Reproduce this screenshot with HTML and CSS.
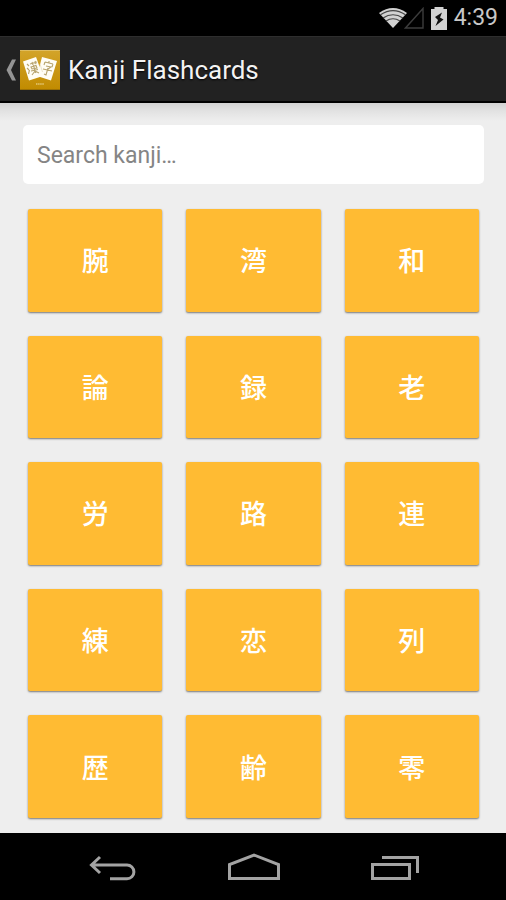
FILE: index.html
```
<!DOCTYPE html>
<html lang="en">
<head>
<meta charset="utf-8">
<meta name="viewport" content="width=device-width, initial-scale=1">
<title>Kanji Flashcards</title>
<link rel="stylesheet" href="styles.css">
</head>
<body>
<div class="status-bar">
  <svg class="wifi" viewBox="0 0 28 20" aria-hidden="true">
    <path d="M0 5Q14-5 28 5L14 20Z" fill="#d2d2d2"/>
    <path d="M1.500 6.800Q14-1.500 26.500 6.800M4 10Q14 3.500 24 10M7 13Q14 8.500 21 13" fill="none" stroke="#444" stroke-width="1.200"/>
  </svg>
  <svg class="signal" viewBox="0 0 20 22" aria-hidden="true"><path d="M1.500 21H19V1.500Z" fill="none" stroke="#3c3c3c" stroke-width="1.400"/></svg>
  <svg class="battery" viewBox="0 0 16 23" aria-hidden="true">
    <path d="M3.500 0H12.500V2H16V23H0V2H3.500Z" fill="#d2d2d2"/>
    <path d="M11 5.500L4 10L7 13L4.500 19L12.500 12.500L9 10.500Z" fill="#111"/>
  </svg>
  <time class="clock">4:39</time>
</div>
<header class="action-bar">
  <button class="up" type="button" aria-label="Navigate up">
    <svg class="chevron" viewBox="0 0 12 24" aria-hidden="true"><path d="M7 1.500H11L6 12L11 22.500H7L1.500 12Z" fill="#959595"/></svg>
    <svg class="app-icon" viewBox="0 0 40 40" aria-hidden="true">
      <defs><linearGradient id="gold" x1="0" y1="0" x2="0" y2="1"><stop offset="0" stop-color="#d3a42a"/><stop offset="1" stop-color="#c18b00"/></linearGradient></defs>
      <rect width="40" height="40" rx="1.500" fill="url(#gold)"/>
      <path d="M0 .5H40" stroke="#dfbd60"/>
      <path d="M0 39.500H40" stroke="#9c7105"/>
      <path d="M3 11.500L16 7L23 26L9 30.500Z" fill="#fffdf5"/>
      <path d="M22 7L37 11L31 30.500L17 26Z" fill="#fffdf5"/>
      <path d="M20 14L22.500 22" stroke="#e3d9bc" stroke-width=".7"/>
      <g fill="none" stroke="#b8a46e" stroke-width="1.100">
        <path d="M7 14L9 16M7 18L9 20M8.500 24L9.500 20M10 14L17 12M12 12L13 15M15 11L16 14M11 17L16 15.500L17 18L12 19ZM13.500 15L15.500 23M11 21L18 19.500M15 21L12 25M15 21L19 23"/>
        <path d="M25 12L33 14M25 12L24 15M33 14L32 17M29 11L29 13M26 16L31 17L28 19M23 19L32 21M28 18L26 25L24 24"/>
      </g>
      <path d="M16 34H24" stroke="#e2c777" stroke-width="1.500" stroke-dasharray="1.500 .6"/>
    </svg>
  </button>
  <h1 class="title">Kanji Flashcards</h1>
</header>
<main class="content">
  <input class="search" type="search" placeholder="Search kanji…" aria-label="Search kanji">
  <div class="cards" lang="ja">
    <button class="card" type="button">腕</button>
    <button class="card" type="button">湾</button>
    <button class="card" type="button">和</button>
    <button class="card" type="button">論</button>
    <button class="card" type="button">録</button>
    <button class="card" type="button">老</button>
    <button class="card" type="button">労</button>
    <button class="card" type="button">路</button>
    <button class="card" type="button">連</button>
    <button class="card" type="button">練</button>
    <button class="card" type="button">恋</button>
    <button class="card" type="button">列</button>
    <button class="card" type="button">歴</button>
    <button class="card" type="button">齢</button>
    <button class="card" type="button">零</button>
  </div>
</main>
<nav class="nav-bar" aria-label="System">
  <button class="nav-button" type="button" aria-label="Back">
    <svg class="nav-icon" viewBox="0 0 54 34" aria-hidden="true"><path d="M14 6L5.500 14L14 22M5.500 14H41A6.900 6.900 0 0 1 41 27.800H24" fill="none" stroke="#a3a3a3" stroke-width="3"/></svg>
  </button>
  <button class="nav-button" type="button" aria-label="Home">
    <svg class="nav-icon" viewBox="0 0 54 34" aria-hidden="true"><path d="M2.500 27.500V13.500L27 4L51.500 13.500V27.500Z" fill="none" stroke="#a3a3a3" stroke-width="3"/></svg>
  </button>
  <button class="nav-button" type="button" aria-label="Recent apps">
    <svg class="nav-icon" viewBox="0 0 54 34" aria-hidden="true"><path d="M4.500 13.500H41.500V27.500H4.500ZM14 6.500H49.500V22" fill="none" stroke="#a3a3a3" stroke-width="3"/></svg>
  </button>
</nav>
</body>
</html>
```
FILE: styles.css
```
* {
  box-sizing: border-box;
}

body {
  margin: 0;
  min-height: 100vh;
  display: flex;
  flex-direction: column;
  background: #eee;
  font-family: Roboto, "Noto Sans CJK JP", sans-serif;
}

button {
  border: 0;
  padding: 0;
  background: none;
  font: inherit;
  cursor: pointer;
}

svg {
  display: block;
}

.status-bar {
  display: flex;
  align-items: center;
  justify-content: flex-end;
  height: 36px;
  padding-right: 8px;
  background: #000;
}

.wifi {
  width: 28px;
  height: 20px;
}

.signal {
  width: 20px;
  height: 22px;
  margin-left: -3px;
}

.battery {
  width: 16px;
  height: 23px;
  margin: 0 7px;
}

.clock {
  color: #c8c8c8;
  font-size: 23px;
  line-height: 36px;
}

.action-bar {
  display: flex;
  align-items: center;
  gap: 8px;
  height: 67px;
  padding: 2px 0 0 5px;
  background: #222;
  border-top: 1px solid #2e2e2e;
  border-bottom: 2px solid #000;
}

.up {
  display: flex;
  align-items: center;
  gap: 3px;
}

.chevron {
  width: 12px;
  height: 24px;
}

.app-icon {
  width: 40px;
  height: 40px;
}

.title {
  margin: 0;
  color: #f3f3f3;
  font-size: 26px;
  font-weight: 400;
  line-height: 32px;
  text-shadow: 0 1px 2px #000;
}

.content {
  flex: 1;
  display: flex;
  flex-direction: column;
  gap: 25px;
  padding: 22px 22px 15px 23px;
  background: linear-gradient(#d2d2d2, #e2e2e2 8px, #eee 18px);
}

.search {
  width: 100%;
  height: 59px;
  padding: 2px 14px 0;
  border: 0;
  border-radius: 5px;
  background: #fff;
  color: #333;
  font: inherit;
  font-size: 23px;
  appearance: none;
}

.search::placeholder {
  color: #858585;
  opacity: 1;
}

.cards {
  flex: 1;
  display: grid;
  grid-template-columns: repeat(3, 1fr);
  grid-auto-rows: 1fr;
  gap: 24px;
  padding: 0 5px;
}

.card {
  min-height: 80px;
  border-radius: 2px;
  background: #fb3;
  box-shadow: 0 1px 2px rgba(0, 0, 0, 0.5);
  color: #fff;
  font-family: "Noto Sans CJK JP", sans-serif;
  font-size: 27px;
  font-weight: 500;
  line-height: 40px;
}

.nav-bar {
  display: flex;
  align-items: center;
  justify-content: center;
  gap: 87px;
  height: 67px;
  padding: 3px 0 0 1px;
  background: #000;
}

.nav-icon {
  width: 54px;
  height: 34px;
}
```
